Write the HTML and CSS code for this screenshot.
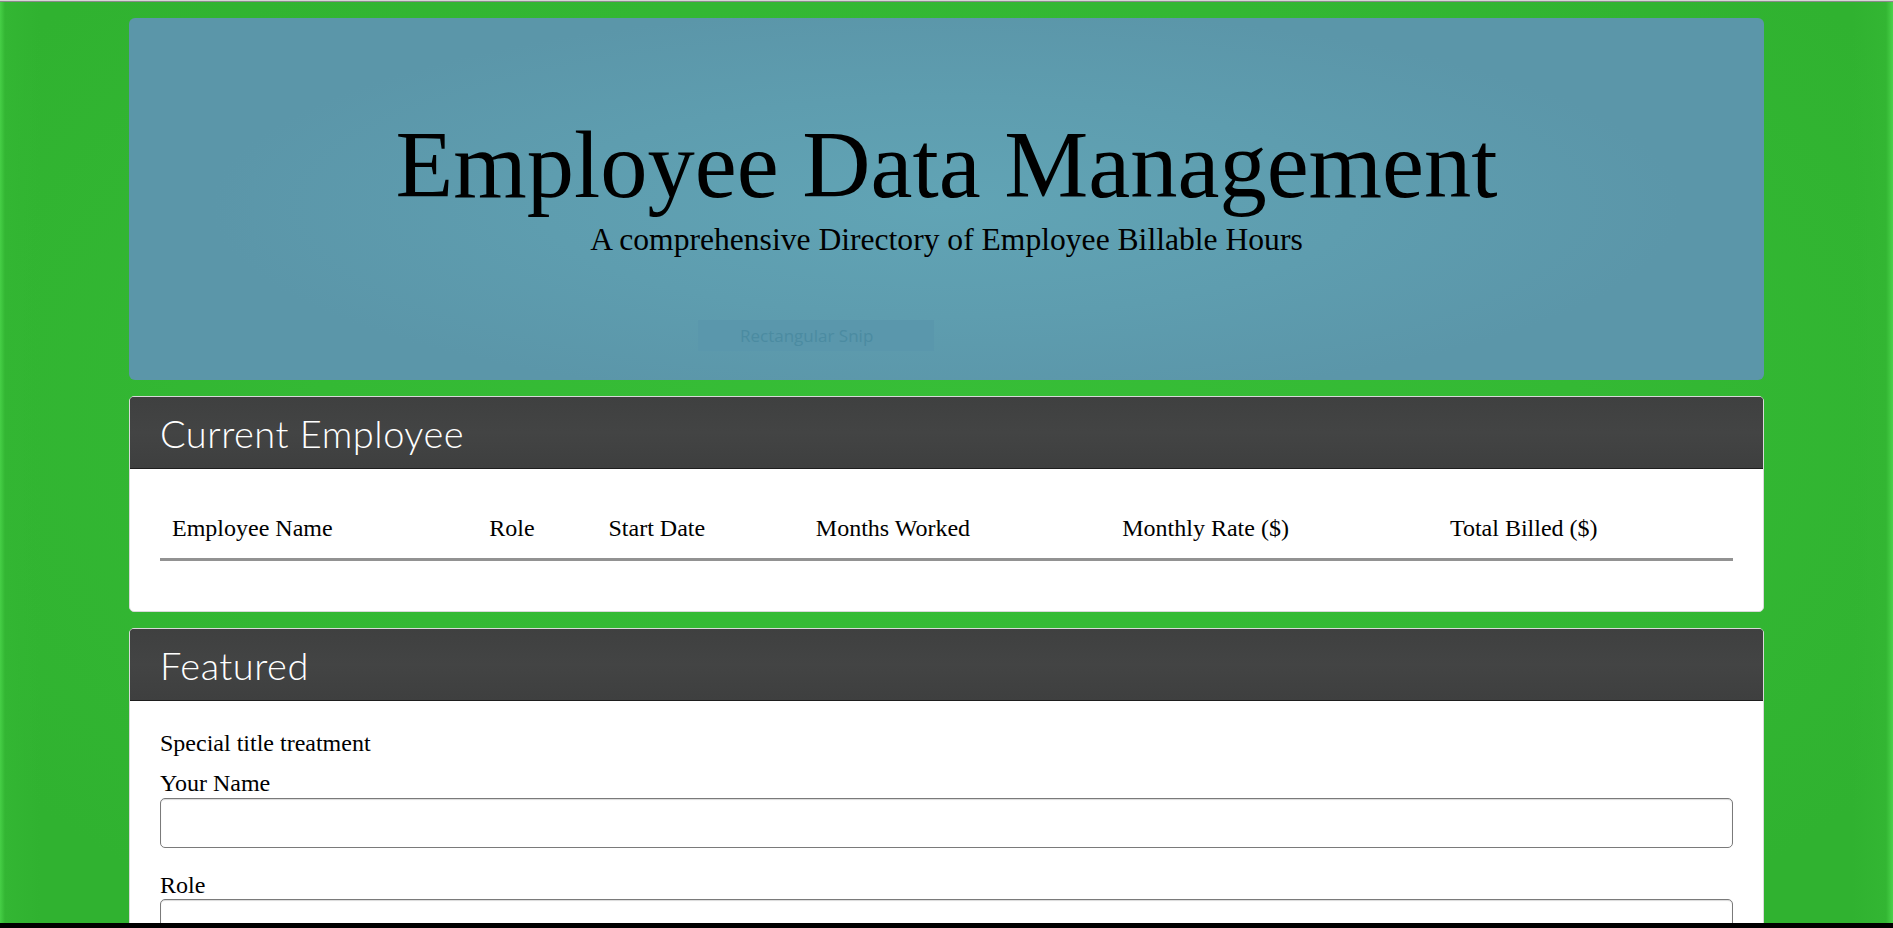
FILE: index.html
```html
<!DOCTYPE html>
<html lang="en">
<head>
<meta charset="utf-8">
<title>Employee Data Management</title>
<link rel="stylesheet" href="styles.css">
</head>
<body>
<div class="topline"></div>
<main class="page">
  <header class="jumbotron">
    <h1 class="display-title">Employee Data Management</h1>
    <p class="lead">A comprehensive Directory of Employee Billable Hours</p>
    <div class="snip-tip">Rectangular Snip</div>
  </header>

  <section class="card">
    <div class="card-header"><h2 class="card-heading">Current Employee</h2></div>
    <div class="card-body">
      <table class="emp-table">
        <thead>
          <tr>
            <th>Employee Name</th>
            <th>Role</th>
            <th>Start Date</th>
            <th>Months Worked</th>
            <th>Monthly Rate ($)</th>
            <th>Total Billed ($)</th>
          </tr>
        </thead>
        <tbody></tbody>
      </table>
    </div>
  </section>

  <section class="card">
    <div class="card-header"><h2 class="card-heading">Featured</h2></div>
    <div class="card-body card-body-form">
      <div class="card-title">Special title treatment</div>
      <form class="emp-form">
        <div class="form-group">
          <label class="form-label" for="name">Your Name</label>
          <input class="form-input" id="name" type="text">
        </div>
        <div class="form-group">
          <label class="form-label" for="role">Role</label>
          <input class="form-input" id="role" type="text">
        </div>
        <div class="form-group">
          <label class="form-label" for="start">Start Date</label>
          <input class="form-input" id="start" type="text">
        </div>
        <div class="form-group">
          <label class="form-label" for="rate">Monthly Rate</label>
          <input class="form-input" id="rate" type="text">
        </div>
        <button class="submit-btn" type="button">Submit</button>
      </form>
    </div>
  </section>
</main>
<div class="bottombar"></div>
</body>
</html>
```

FILE: styles.css
```css
html, body {
  margin: 0;
  padding: 0;
}

body {
  font-family: "Liberation Serif", "Times New Roman", serif;
  font-size: 24px;
  line-height: 1.2;
  color: #000;
  background-color: #32b632;
  background-image:
    linear-gradient(to right, #46cf46 0, #33b633 5px, rgba(49,180,49,0) 40px, rgba(49,180,49,0) calc(100% - 40px), #33b633 calc(100% - 7px), #4ad34a 100%),
    radial-gradient(ellipse 60% 70% at 50% 45%, #37be37 0%, #34b934 55%, #30b230 100%);
  background-attachment: fixed;
}

.topline {
  height: 1px;
  background: #d6d6d6;
  border-bottom: 1px solid #8a8a8a;
}

.page {
  width: 1635px;
  margin: 0 auto;
  padding-top: 16px;
  padding-bottom: 40px;
}

/* Jumbotron */
.jumbotron {
  position: relative;
  height: 362px;
  box-sizing: border-box;
  padding-top: 92px;
  border-radius: 6px;
  background-color: #5c98aa;
  background-image: radial-gradient(ellipse 45% 55% at 50% 52%, #61a4b5 0%, #5e9daf 55%, #5b96a9 100%);
  text-align: center;
  margin-bottom: 16px;
}

.display-title {
  margin: 0;
  font-family: "Liberation Serif", "Times New Roman", serif;
  font-weight: 400;
  font-size: 94.5px;
  line-height: 1.17;
  color: #000;
}

.lead {
  margin: 0;
  font-size: 31.6px;
  line-height: 1.2;
  color: #000;
}

.snip-tip {
  position: absolute;
  left: 569px;
  top: 302px;
  width: 236px;
  height: 31px;
  box-sizing: border-box;
  padding-left: 42px;
  background: #5a97ac;
  color: #4b8ba1;
  font-family: "Open Sans", "Noto Sans", sans-serif;
  font-size: 17px;
  line-height: 31px;
  text-align: left;
}

/* Cards */
.card {
  background: #fff;
  border: 1px solid #d9d9d9;
  border-radius: 5px;
  margin-bottom: 16px;
  overflow: hidden;
}

.card-header {
  background: #404141;
  background-image: linear-gradient(to bottom, #3f4040, #434444 50%, #3e3f3f);
  border-bottom: 1px solid #1e1e1e;
  padding: 14px 30px 13px;
}

.card-heading {
  margin: 0;
  font-family: "Lato", "Open Sans", sans-serif;
  font-weight: 300;
  font-size: 38px;
  letter-spacing: 0.5px;
  line-height: 44px;
  color: #fff;
}

.card-body {
  padding: 29px 30px 29px;
}

.card-body-form {
  padding-top: 28px;
}

/* Table */
.emp-table {
  width: 100%;
  border-collapse: collapse;
  margin-bottom: 21px;
}

.emp-table th {
  text-align: left;
  font-weight: 400;
  padding: 12px;
  line-height: 1.5;
  border-bottom: 3px solid #929292;
  white-space: nowrap;
}

/* Form */
.card-title {
  margin-bottom: 11px;
}

.form-group {
  margin-bottom: 23px;
}

.form-label {
  display: block;
}

.form-input {
  display: block;
  width: 100%;
  height: 50px;
  box-sizing: border-box;
  margin: 0;
  border: 1px solid #7a7a7a;
  border-radius: 5px;
  box-shadow: inset 0 1px 1px rgba(0,0,0,.15);
  font-family: inherit;
  font-size: 24px;
  padding: 6px 12px;
  background: #fff;
}

.submit-btn {
  font-family: inherit;
  font-size: 24px;
  padding: 6px 18px;
  border: 1px solid #7a7a7a;
  border-radius: 5px;
  background: #efefef;
}

.bottombar {
  position: fixed;
  left: 0;
  right: 0;
  bottom: 0;
  height: 5px;
  background: #000;
}
```
